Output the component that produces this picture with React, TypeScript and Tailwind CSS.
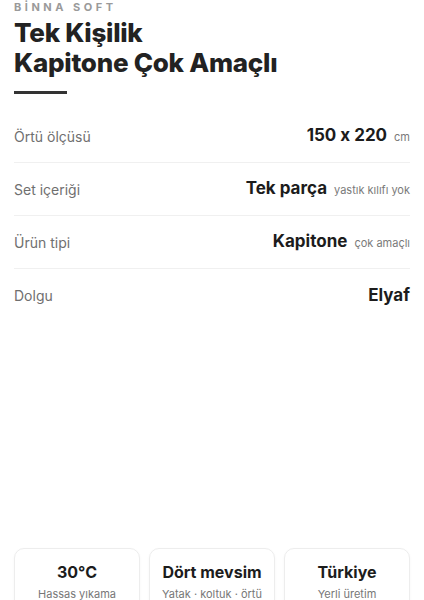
import React from 'react';

const specs = [
  { label: 'Örtü ölçüsü', value: '150 x 220', note: 'cm' },
  { label: 'Set içeriği', value: 'Tek parça', note: 'yastık kılıfı yok' },
  { label: 'Ürün tipi', value: 'Kapitone', note: 'çok amaçlı' },
  { label: 'Dolgu', value: 'Elyaf', note: '' },
];

const features = [
  { title: '30°C', sub: 'Hassas yıkama' },
  { title: 'Dört mevsim', sub: 'Yatak · koltuk · örtü' },
  { title: 'Türkiye', sub: 'Yerli üretim' },
];

const App: React.FC = () => {
  return (
    <div
      className="w-[424px] h-[600px] overflow-hidden bg-white px-[14px] [font-feature-settings:'calt'_0]"
      style={{ fontFamily: 'Inter, "Noto Sans", sans-serif' }}
    >
      <p className="pt-[1px] text-[11px] font-bold tracking-[0.32em] leading-[12px] text-[#9a9a9a]">BİNNA SOFT</p>
      <h1 className="mt-[5px] text-[26px] font-extrabold leading-[30px] tracking-[-0.01em] text-[#222]">
        Tek Kişilik
        <br />
        Kapitone Çok Amaçlı
      </h1>
      <div className="mt-[13px] h-[3px] w-[53px] bg-[#333]" />

      <div className="mt-[16px]">
        {specs.map((s, i) => (
          <div
            key={s.label}
            className={`flex h-[53px] items-center justify-between ${
              i < specs.length - 1 ? 'border-b border-[#f0f0f0]' : ''
            }`}
          >
            <span className="text-[14px] text-[#6f6f6f]">{s.label}</span>
            <span className="flex items-baseline gap-[7px]">
              <span className="text-[17px] font-bold text-[#1c1c1c]">{s.value}</span>
              {s.note && <span className="text-[11px] text-[#7a7a7a]">{s.note}</span>}
            </span>
          </div>
        ))}
      </div>

      <div className="mt-[226px] grid grid-cols-3 gap-[9px]">
        {features.map((f) => (
          <div
            key={f.title}
            className="flex h-[80px] flex-col items-center rounded-[10px] border border-[#ededed] pt-[13px] shadow-[0_1px_3px_rgba(0,0,0,0.04)]"
          >
            <span className="text-[16px] font-bold leading-[20px] text-[#1c1c1c]">{f.title}</span>
            <span className="mt-[5px] text-[11px] leading-[14px] text-[#777]">{f.sub}</span>
          </div>
        ))}
      </div>
    </div>
  );
};

export default App;
